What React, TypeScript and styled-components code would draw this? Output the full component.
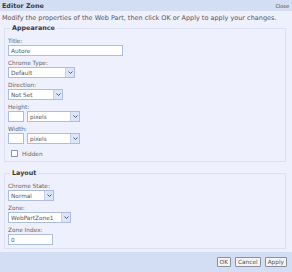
import styled, { createGlobalStyle } from 'styled-components';

const GlobalStyle = createGlobalStyle`
    html, body {
        margin: 0;
        padding: 0;
        background: #eef0fd;
    }
    body {
        font-family: "DejaVu Sans", Verdana, sans-serif;
        color: #333;
    }
`;

const Zone = styled.div`
    width: 292px;
    height: 272px;
    display: flex;
    flex-direction: column;
    background: #eef0fd;
    overflow: hidden;
`;

const Header = styled.div`
    height: 11px;
    flex-shrink: 0;
    background: #d3ddf4;
    display: flex;
    align-items: center;
    justify-content: space-between;
    padding: 0 3px 0 2px;
`;

const HeaderTitle = styled.span`
    font-size: 6.4px;
    font-weight: bold;
    color: #3a3a3a;
`;

const CloseLink = styled.span`
    font-size: 5px;
    color: #444;
`;

const Description = styled.div`
    font-size: 6.5px;
    color: #555;
    padding: 3px 2px 0 2px;
    height: 10px;
    flex-shrink: 0;
    white-space: nowrap;
`;

const Body = styled.div`
    flex: 1;
    min-height: 0;
    padding: 0 6px 0 4px;
    display: flex;
    flex-direction: column;
    gap: 7px;
`;

const Group = styled.fieldset`
    margin: 0;
    padding: 2px 3px 3px 3px;
    border: 1px solid #dbe1f3;
    display: flex;
    flex-direction: column;
    align-items: flex-start;
`;

const Legend = styled.legend`
    font-size: 6.4px;
    font-weight: bold;
    color: #3a3a3a;
    padding: 0 2px;
    margin-left: 2px;
`;

const Label = styled.div`
    font-size: 5.8px;
    color: #666;
    line-height: 8px;
    margin-top: 3px;
`;

const TextBox = styled.input<{ $w: number }>`
    box-sizing: border-box;
    width: ${(p) => p.$w}px;
    height: 11px;
    border: 1px solid #aebcdf;
    background: #fff;
    font-family: inherit;
    font-size: 5.8px;
    color: #555;
    padding: 0 2px;
    margin: 0;
    outline: none;
`;

const SelectFrame = styled.div<{ $w: number }>`
    box-sizing: border-box;
    width: ${(p) => p.$w}px;
    height: 11px;
    border: 1px solid #aebcdf;
    background: #fff;
    display: flex;
    align-items: stretch;
`;

const Select = styled.select`
    appearance: none;
    flex: 1;
    min-width: 0;
    border: none;
    background: transparent;
    font-family: inherit;
    font-size: 5.8px;
    color: #555;
    padding: 0 2px;
    margin: 0;
    outline: none;
`;

const Arrow = styled.div`
    width: 8px;
    background: #dde6f8;
    border-left: 1px solid #c4d0ec;
    display: flex;
    align-items: center;
    justify-content: center;
`;

const Row = styled.div`
    display: flex;
    gap: 3px;
`;

const CheckRow = styled.label`
    display: flex;
    align-items: center;
    gap: 4px;
    margin: 6px 0 1px 3px;
    font-size: 5.8px;
    color: #666;
`;

const Check = styled.span`
    box-sizing: border-box;
    width: 7px;
    height: 7px;
    border: 1px solid #8d96aa;
    background: #fff;
`;

const Footer = styled.div`
    height: 20px;
    flex-shrink: 0;
    background: #d3ddf4;
    display: flex;
    align-items: center;
    justify-content: flex-end;
    gap: 4px;
    padding: 0 5px;
`;

const Button = styled.button`
    height: 10px;
    padding: 0 2px;
    border: 1px solid #8a8f99;
    border-radius: 1px;
    background: #f4f4f4;
    font-family: inherit;
    font-size: 5.8px;
    color: #555;
    line-height: 8px;
`;

function DropDown({ width, value, options }: { width: number; value: string; options: string[] }) {
    return (
        <SelectFrame $w={width}>
            <Select defaultValue={value}>
                {options.map((o) => (
                    <option key={o}>{o}</option>
                ))}
            </Select>
            <Arrow>
                <svg width="5" height="3" viewBox="0 0 5 3">
                    <path d="M0.5 0.5 L2.5 2.5 L4.5 0.5" stroke="#4a5a80" strokeWidth="1" fill="none" />
                </svg>
            </Arrow>
        </SelectFrame>
    );
}

export default function App() {
    return (
        <>
            <GlobalStyle />
            <Zone>
                <Header>
                    <HeaderTitle>Editor Zone</HeaderTitle>
                    <CloseLink>Close</CloseLink>
                </Header>
                <Description>
                    Modify the properties of the Web Part, then click OK or Apply to apply your changes.
                </Description>
                <Body>
                    <Group>
                        <Legend>Appearance</Legend>
                        <Label>Title:</Label>
                        <TextBox $w={115} defaultValue="Autore" />
                        <Label>Chrome Type:</Label>
                        <DropDown width={67} value="Default" options={['Default', 'Title and Border', 'None']} />
                        <Label>Direction:</Label>
                        <DropDown width={55} value="Not Set" options={['Not Set', 'Left to Right', 'Right to Left']} />
                        <Label>Height:</Label>
                        <Row>
                            <TextBox $w={16} />
                            <DropDown width={53} value="pixels" options={['pixels', 'points', 'percent']} />
                        </Row>
                        <Label>Width:</Label>
                        <Row>
                            <TextBox $w={16} />
                            <DropDown width={53} value="pixels" options={['pixels', 'points', 'percent']} />
                        </Row>
                        <CheckRow>
                            <Check />
                            Hidden
                        </CheckRow>
                    </Group>
                    <Group>
                        <Legend>Layout</Legend>
                        <Label>Chrome State:</Label>
                        <DropDown width={46} value="Normal" options={['Normal', 'Minimized']} />
                        <Label>Zone:</Label>
                        <DropDown width={63} value="WebPartZone1" options={['WebPartZone1']} />
                        <Label>Zone Index:</Label>
                        <TextBox $w={45} defaultValue="0" />
                    </Group>
                </Body>
                <Footer>
                    <Button>OK</Button>
                    <Button>Cancel</Button>
                    <Button>Apply</Button>
                </Footer>
            </Zone>
        </>
    );
}
